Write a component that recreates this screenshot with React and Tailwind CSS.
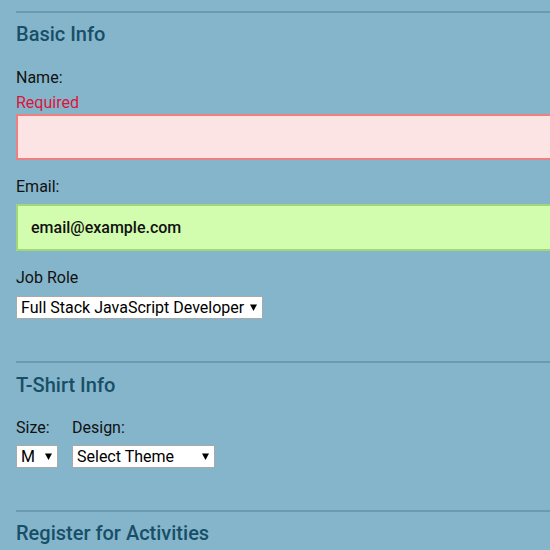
import React from 'react';

const Arrow = () => (
  <svg width="7" height="7" viewBox="0 0 7 7" className="shrink-0">
    <polygon points="0,0.5 7,0.5 3.5,7" fill="#000" />
  </svg>
);

const FakeSelect = ({ value, width }) => (
  <div className={`flex h-[23px] items-center justify-between border border-[#a9a9a9] bg-white pl-[4px] pr-[5px] ${width}`}>
    <span className="text-[16px] leading-[20px] text-black">{value}</span>
    <Arrow />
  </div>
);

const Legend = ({ children, className = '' }) => (
  <h2 className={`text-[20px] font-medium leading-[24px] text-[#184f68] ${className}`}>{children}</h2>
);

export default function App() {
  return (
    <div
      className="h-[550px] w-[550px] overflow-hidden bg-[#85b5cb] pl-4"
      style={{ fontFamily: 'Roboto, "Noto Sans", sans-serif' }}
    >
      <div className="w-[700px]">
        {/* basic info */}
        <div className="mt-[11px] border-t-2 border-[#6a9cb1]">
          <Legend className="mt-[9px]">Basic Info</Legend>

          <label className="mt-[22px] block text-[16px] leading-[20px] text-[#111]">Name:</label>
          <p className="mt-[5px] text-[16px] leading-[20px] text-[#dc143c]">Required</p>
          <div className="mt-[1px] h-[46px] border-2 border-[#f08080] bg-[#fce4e4]" />

          <label className="mt-[17px] block text-[16px] leading-[20px] text-[#111]">Email:</label>
          <div className="mt-[7px] flex h-[47px] items-center border-2 border-[#9fd779] bg-[#d2fdae] pl-[13px]">
            <span className="text-[16px] font-medium text-[#111]">email@example.com</span>
          </div>

          <label className="mt-[17px] block text-[16px] leading-[20px] text-[#111]">Job Role</label>
          <div className="mt-[8px]">
            <FakeSelect value="Full Stack JavaScript Developer" width="w-[247px]" />
          </div>
        </div>

        {/* t-shirt info */}
        <div className="mt-[42px] border-t-2 border-[#6a9cb1]">
          <Legend className="mt-[10px]">T-Shirt Info</Legend>
          <div className="mt-[21px] flex gap-[14px]">
            <div>
              <label className="block text-[16px] leading-[20px] text-[#111]">Size:</label>
              <div className="mt-[7px]">
                <FakeSelect value="M" width="w-[42px]" />
              </div>
            </div>
            <div>
              <label className="block text-[16px] leading-[20px] text-[#111]">Design:</label>
              <div className="mt-[7px]">
                <FakeSelect value="Select Theme" width="w-[143px]" />
              </div>
            </div>
          </div>
        </div>

        {/* activities */}
        <div className="mt-[42px] border-t-2 border-[#6a9cb1]">
          <Legend className="mt-[9px]">Register for Activities</Legend>
        </div>
      </div>
    </div>
  );
}
